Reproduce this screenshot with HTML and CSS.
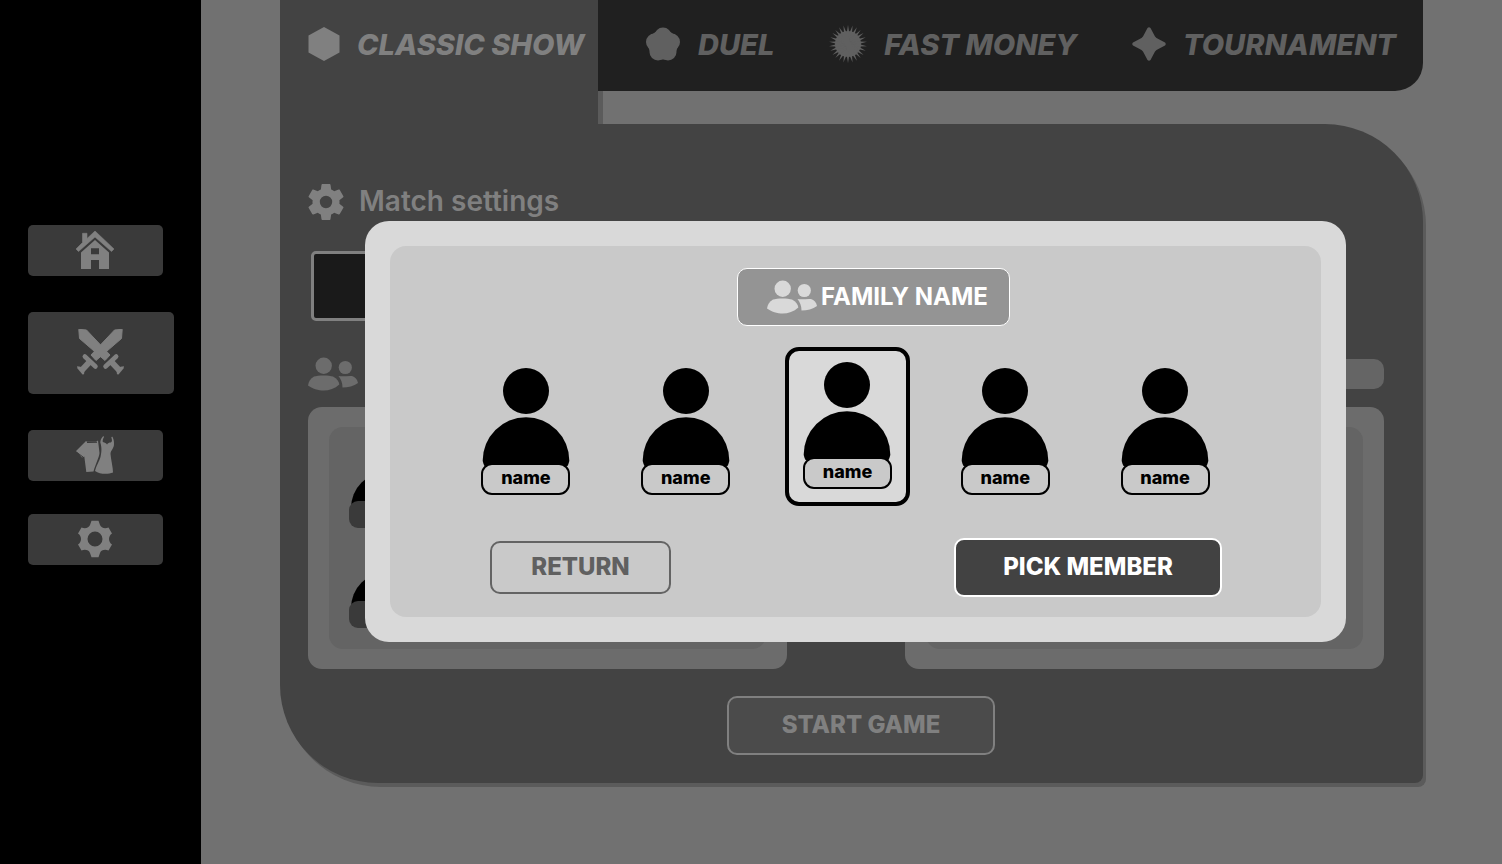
FILE: index.html
```html
<!DOCTYPE html>
<html lang="en">
<head>
<meta charset="utf-8">
<title>Match lobby</title>
<link rel="stylesheet" href="styles.css">
</head>
<body>
<svg class="sprite" aria-hidden="true">
  <symbol id="people" viewBox="0 0 50 33">
    <circle cx="15.7" cy="8.3" r="8.2"/><circle cx="37.3" cy="10" r="6.6"/>
    <path d="M6 19C10 17.5 21 17.5 25 19C29 21 31 24 31.3 27C27 31 21 33 15.7 33S4 31 0 28C.5 24 2.500 21 6 19Z"/>
    <path d="M30.500 18.500C35 19.500 40 18 44 18.500C47 19.500 49.500 22 50 25.500C46 28.500 40 30 34.500 30C34.500 25 33 22 30.500 18.500Z"/>
  </symbol>
  <symbol id="person" viewBox="0 0 88 98">
    <circle cx="44" cy="23" r="23"/>
    <path d="M2.500 98C1 95 .7 93 .7 92.500A43.300 43.300 0 0 1 87.300 92.500C87.300 93 87 95 85.500 98Z"/>
  </symbol>
  <symbol id="person-small" viewBox="0 0 76 94">
    <circle cx="38" cy="19" r="18"/><path d="M2 74a36 36 0 0 1 72 0v14H2Z"/>
  </symbol>
  <symbol id="sword" viewBox="0 0 47 47">
    <path d="M1.800 .3 9.500 1 33 26 28 31.500 2.500 9.500Z" stroke="currentColor"/>
    <path d="M39.200 27.500 28.500 37.500" fill="none" stroke="currentColor" stroke-width="4.500" stroke-linecap="round"/>
    <path d="M34.500 33 42 41" fill="none" stroke="currentColor" stroke-width="6"/>
    <path d="M47 37.200 46.500 39.500 41.500 45.500 40 45.200 39.500 41.500 43.500 37.800Z"/>
  </symbol>
</svg>

<div class="app">
  <nav class="side" aria-label="Main">
    <button class="side-btn" type="button" aria-label="Home">
      <svg width="38" height="38" viewBox="0 0 38 38"><path d="M19 0 38 18 35.500 20.500 19 6 2.500 20.500 0 18 6.500 11.500V2.300H11V7.500Z" stroke="currentColor" stroke-width=".6"/><path fill-rule="evenodd" d="M19 9 33 21.500V38H23V29H15V38H5V21.500ZM15 17.300V23.300H23V17.300Z"/></svg>
    </button>
    <button class="side-btn side-btn-active" type="button" aria-label="Play">
      <svg width="47" height="47" viewBox="0 0 47 47"><use href="#sword"/><use href="#sword" transform="translate(47 0) scale(-1 1)"/></svg>
    </button>
    <button class="side-btn" type="button" aria-label="Wardrobe">
      <svg width="38" height="38" viewBox="0 0 38 38"><path d="M10 5 11 5.800H20L22 4.500 23.500 17C23 22 19.500 28 17.500 35.500L10.300 36 8.300 20.500 6 21.500 0 15Z"/><path d="M27.300 0C25.500 2 24.300 4 24.300 6.500C25.500 10 26 14 24.500 21C23 26 20.500 29 19 35C24 38.500 32 38.500 37 36.500C37 31 35 24 34.500 18C34.500 14 38 13 38 8C38 5 37.500 3 36.500 .8L35.300 1C36 4 36.500 5 35 6.500C33 6.500 32 7 31 8.500C30 7 29 6.500 26.800 6C26.500 4 27 3 28 1Z"/><path class="cut" d="M1 16.500 7 21M11 6.500 21 6.300"/></svg>
    </button>
    <button class="side-btn" type="button" aria-label="Settings">
      <svg width="36" height="38" viewBox="-18 -19 36 38"><path fill-rule="evenodd" d="M-3.500-18.300H3.500L5-14C6-11 10-10 13.500-11.500L17-5.500C13-3 13 3 17 5.500L13.500 11.500C10 10 6 11 5 14L3.500 18.300H-3.500L-5 14C-6 11-10 10-13.500 11.500L-17 5.500C-13 3-13-3-17-5.500L-13.500-11.500C-10-10-6-11-5-14ZM0-7.500A7.500 7.500 0 1 0 0 7.500A7.500 7.500 0 1 0 0-7.500Z"/></svg>
    </button>
  </nav>

  <main class="main">
    <nav class="tabs" aria-label="Game modes">
      <a class="tab tab-active" href="#classic" aria-current="page">
        <svg width="32" height="34" viewBox="0 0 32 34"><path d="M16 0 31.500 8.500V25.500L16 34 .5 25.500V8.500Z"/></svg>
        <span>CLASSIC SHOW</span>
      </a>
      <div class="tab-bar">
        <a class="tab" href="#duel">
          <svg width="36" height="36" viewBox="0 0 36 36"><circle cx="18" cy="10" r="8.500"/><circle cx="26.500" cy="16" r="8.500"/><circle cx="23" cy="26" r="8.500"/><circle cx="13" cy="26" r="8.500"/><circle cx="9.500" cy="16" r="8.500"/><path d="M18 10 26.500 16 23 26H13L9.500 16Z" stroke="currentColor" stroke-width="15" stroke-linejoin="round"/></svg>
          <span>DUEL</span>
        </a>
        <a class="tab" href="#fast-money">
          <svg width="38" height="38" viewBox="-19 -19 38 38">
            <defs><path id="ray" d="M0-19 3 0 0 19-3 0Z"/></defs>
            <circle r="13"/>
            <use href="#ray"/><use href="#ray" transform="rotate(14)"/><use href="#ray" transform="rotate(28)"/><use href="#ray" transform="rotate(42)"/><use href="#ray" transform="rotate(55)"/><use href="#ray" transform="rotate(69)"/><use href="#ray" transform="rotate(83)"/><use href="#ray" transform="rotate(97)"/><use href="#ray" transform="rotate(111)"/><use href="#ray" transform="rotate(125)"/><use href="#ray" transform="rotate(138)"/><use href="#ray" transform="rotate(152)"/><use href="#ray" transform="rotate(166)"/>
          </svg>
          <span>FAST MONEY</span>
        </a>
        <a class="tab" href="#tournament">
          <svg width="34" height="34" viewBox="-17 -17 34 34"><path d="M-1.500-16Q0-17.500 1.500-16L6-7.500 7.500-6 16-1.500Q17.500 0 16 1.500L7.500 6 6 7.500 1.500 16Q0 17.500-1.500 16L-6 7.500-7.500 6-16 1.500Q-17.500 0-16-1.500L-7.500-6-6-7.500Z"/></svg>
          <span>TOURNAMENT</span>
        </a>
      </div>
    </nav>

    <section class="panel">
      <h1 class="heading">
        <svg width="36" height="36" viewBox="2.400 2.400 19.200 19.200"><path d="M19.140 12.940c.04-.3.060-.61.060-.94 0-.32-.02-.64-.07-.94l2.030-1.580c.18-.14.230-.41.120-.61l-1.920-3.320c-.12-.22-.37-.29-.59-.22l-2.390.96c-.5-.38-1.030-.7-1.620-.94l-.36-2.540c-.04-.24-.24-.41-.48-.41h-3.840c-.24 0-.43.170-.47.410l-.36 2.540c-.59.240-1.130.57-1.620.94l-2.390-.96c-.22-.08-.47 0-.59.220L2.740 8.870c-.12.210-.08.470.120.610l2.030 1.580c-.05.300-.09.630-.09.940s.02.640.07.940l-2.030 1.580c-.18.140-.23.410-.12.610l1.920 3.320c.12.220.37.290.59.220l2.390-.96c.5.380 1.030.7 1.620.94l.36 2.540c.05.240.24.410.48.410h3.840c.24 0 .44-.17.470-.41l.36-2.540c.59-.24 1.130-.56 1.620-.94l2.390.96c.22.080.47 0 .59-.22l1.920-3.320c.12-.22.070-.47-.12-.61zM12 15.300a3.300 3.300 0 1 1 0-6.600 3.300 3.300 0 0 1 0 6.600Z"/></svg>
        <span>Match settings</span>
      </h1>
      <div class="setting"></div>
      <div class="teams-head">
        <svg width="50" height="34"><use href="#people"/></svg>
        <span class="pill"></span>
      </div>
      <div class="teams">
        <div class="team"><div class="team-inner">
          <div class="mini"><svg width="76" height="94"><use href="#person-small"/></svg><span class="mini-tag"></span></div>
          <div class="mini"><svg width="76" height="94"><use href="#person-small"/></svg><span class="mini-tag"></span></div>
        </div></div>
        <div class="team"><div class="team-inner"></div></div>
      </div>
      <button class="btn start" type="button">START GAME</button>
    </section>

    <div class="overlay">
      <div class="modal" role="dialog" aria-modal="true" aria-labelledby="family">
        <div class="modal-body">
          <h2 class="family" id="family"><svg width="50" height="34"><use href="#people"/></svg>FAMILY NAME</h2>
          <div class="members">
            <button class="member" type="button" aria-pressed="false"><svg width="88" height="98"><use href="#person"/></svg><span class="tag">name</span></button>
            <button class="member" type="button" aria-pressed="false"><svg width="88" height="98"><use href="#person"/></svg><span class="tag">name</span></button>
            <button class="member member-picked" type="button" aria-pressed="true"><svg width="88" height="98"><use href="#person"/></svg><span class="tag">name</span></button>
            <button class="member" type="button" aria-pressed="false"><svg width="88" height="98"><use href="#person"/></svg><span class="tag">name</span></button>
            <button class="member" type="button" aria-pressed="false"><svg width="88" height="98"><use href="#person"/></svg><span class="tag">name</span></button>
          </div>
          <div class="actions">
            <button class="btn return" type="button">RETURN</button>
            <button class="btn pick" type="button">PICK MEMBER</button>
          </div>
        </div>
      </div>
    </div>
  </main>
</div>
</body>
</html>
```
FILE: styles.css
```css
* { box-sizing: border-box; }

body {
  margin: 0;
  background: #717171;
  font-family: Inter, "Liberation Sans", sans-serif;
}

button { font: inherit; color: inherit; margin: 0; padding: 0; border: 0; background: none; }
svg { display: block; flex: none; fill: currentColor; }
.sprite { position: absolute; width: 0; height: 0; }

.app { display: flex; min-height: 100vh; }

/* Sidebar */
.side {
  flex: none;
  width: 201px;
  padding: 225px 27px 0 28px;
  background: #000;
  color: #808080;
  display: flex;
  flex-direction: column;
  gap: 33px;
}
.side-btn {
  width: 135px;
  height: 51px;
  padding: 0 2px 2px 0;
  border-radius: 5px;
  background: #3a3a3a;
  display: grid;
  place-items: center;
}
.side-btn-active { width: 146px; height: 82px; margin: 3px 0; }
.cut { fill: none; stroke: #3a3a3a; stroke-width: 1; }

/* Game area */
.main { position: relative; flex: 1; padding: 0 79px; }

.tabs { display: flex; align-items: flex-start; }
.tab {
  display: flex;
  align-items: center;
  gap: 17px;
  height: 88px;
  color: inherit;
  text-decoration: none;
  font-size: 29px;
  font-weight: 800;
  font-style: italic;
  white-space: nowrap;
}
.tab-active {
  flex: none;
  width: 318px;
  height: 124px;
  padding: 0 0 36px 28px;
  background: #434343;
  color: #808080;
  box-shadow: 5px 0 #5b5b5b;
}
.tab-bar {
  position: relative;
  flex: 1;
  height: 91px;
  padding: 0 27px 0 47px;
  border-bottom-right-radius: 28px;
  background: #202020;
  color: #606060;
  display: flex;
  justify-content: space-between;
}

.panel {
  padding: 60px 39px 28px 28px;
  border-radius: 0 98px 8px 98px;
  background: #434343;
  color: #808080;
  box-shadow: 3px 4px #5b5b5b;
  display: flex;
  flex-direction: column;
}
.heading {
  display: flex;
  align-items: center;
  gap: 15px;
  height: 36px;
  margin: 0;
  font-size: 28px;
  font-weight: 600;
}
.heading span { padding-bottom: 3px; }
.setting {
  width: 480px;
  height: 70px;
  margin: 31px 3px 0;
  border: 3px solid #808080;
  border-radius: 5px;
  background: #1a1a1a;
}
.teams-head {
  display: flex;
  align-items: center;
  justify-content: space-between;
  margin-top: 36px;
  color: #6c6c6c;
}
.pill { width: 240px; height: 30px; border-radius: 10px; background: #656565; }
.teams {
  display: grid;
  grid-template-columns: 1fr 1fr;
  gap: 118px;
  margin-top: 16px;
}
.team { padding: 20px 21px; border-radius: 14px; background: #6c6c6c; }
.team-inner {
  display: flex;
  flex-direction: column;
  gap: 6px;
  height: 222px;
  padding: 7px 20px;
  border-radius: 14px;
  background: #646464;
}
.mini { display: flex; flex-direction: column; width: 78px; color: #000; }
.mini-tag { height: 27px; margin-top: -27px; border-radius: 9px; background: #3a3a3a; }

.btn {
  border-style: solid;
  border-width: 2px;
  border-radius: 10px;
  font-size: 24px;
  font-weight: 800;
  white-space: nowrap;
}
.start {
  align-self: center;
  width: 268px;
  height: 59px;
  margin: 27px 0 0 30px;
  padding-bottom: 3px;
  border-color: #808080;
  background: #4b4b4b;
}

/* Member picker */
.overlay {
  position: absolute;
  inset: 0;
  padding: 0 156px 2px 164px;
  display: flex;
  align-items: center;
}
.modal { flex: 1; padding: 25px; border-radius: 24px; background: #d9d9d9; }
.modal-body {
  display: flex;
  flex-direction: column;
  padding: 22px 0 20px;
  border-radius: 16px;
  background: #c9c9c9;
}
.family {
  align-self: center;
  display: flex;
  align-items: center;
  gap: 4px;
  height: 58px;
  margin: 0 0 0 36px;
  padding: 0 21px 0 29px;
  border: 1px solid #fff;
  border-radius: 10px;
  background: #949494;
  color: #fff;
  font-size: 24px;
  font-weight: 700;
}
.family svg { color: #d9d9d9; }
.members {
  display: grid;
  grid-template-columns: repeat(5, 1fr);
  justify-items: center;
  margin: 21px 0 32px;
  padding: 0 76px 0 56px;
}
.member {
  display: flex;
  flex-direction: column;
  align-items: center;
  padding: 21px 0 0;
  color: #000;
}
.member-picked {
  width: 125px;
  height: 159px;
  margin-left: 4px;
  padding-top: 11px;
  border: 4px solid #000;
  border-radius: 14px;
  background: #d9d9d9;
}
.tag {
  width: 89px;
  height: 32px;
  margin-top: -3px;
  border: 2px solid #000;
  border-radius: 11px;
  background: #c9c9c9;
  font-size: 18px;
  font-weight: 800;
  line-height: 25px;
}
.actions {
  display: flex;
  align-items: center;
  justify-content: space-between;
  padding: 0 99px 0 100px;
}
.return {
  width: 181px;
  height: 53px;
  padding-bottom: 2px;
  border-color: #636363;
  color: #606060;
}
.pick {
  width: 268px;
  height: 59px;
  padding-bottom: 2px;
  border-color: #fff;
  background: #424242;
  color: #fff;
}
```
